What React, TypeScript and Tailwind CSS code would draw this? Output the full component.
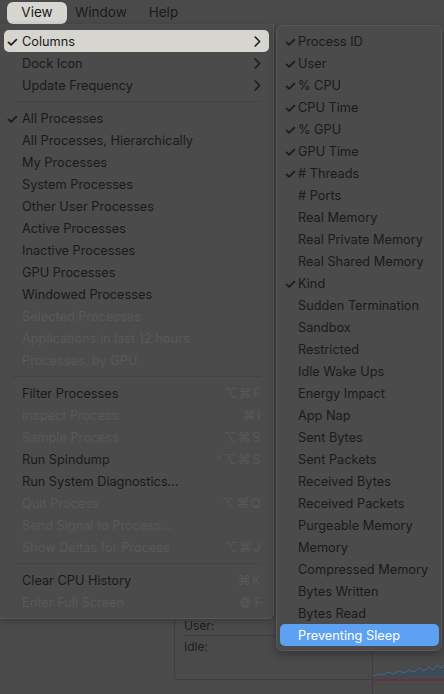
import React from "react";

type Item =
  | { sep: true }
  | { label: string; check?: boolean; disabled?: boolean; shortcut?: string; arrow?: boolean; hl?: boolean; sep?: false };

const leftItems: Item[] = [
  { label: "Columns", check: true, arrow: true, hl: true },
  { label: "Dock Icon", arrow: true },
  { label: "Update Frequency", arrow: true },
  { sep: true },
  { label: "All Processes", check: true },
  { label: "All Processes, Hierarchically" },
  { label: "My Processes" },
  { label: "System Processes" },
  { label: "Other User Processes" },
  { label: "Active Processes" },
  { label: "Inactive Processes" },
  { label: "GPU Processes" },
  { label: "Windowed Processes" },
  { label: "Selected Processes", disabled: true },
  { label: "Applications in last 12 hours", disabled: true },
  { label: "Processes, by GPU", disabled: true },
  { sep: true },
  { label: "Filter Processes", shortcut: "⌥⌘F" },
  { label: "Inspect Process", disabled: true, shortcut: "⌘I" },
  { label: "Sample Process", disabled: true, shortcut: "⌥⌘S" },
  { label: "Run Spindump", shortcut: "^⌥⌘S" },
  { label: "Run System Diagnostics…" },
  { label: "Quit Process", disabled: true, shortcut: "⌥⌘Q" },
  { label: "Send Signal to Process…", disabled: true },
  { label: "Show Deltas for Process", disabled: true, shortcut: "⌥⌘J" },
  { sep: true },
  { label: "Clear CPU History", shortcut: "⌘K" },
  { label: "Enter Full Screen", disabled: true, shortcut: "globe" },
];

const cols: [string, boolean][] = [
  ["Process ID", true],
  ["User", true],
  ["% CPU", true],
  ["CPU Time", true],
  ["% GPU", true],
  ["GPU Time", true],
  ["# Threads", true],
  ["# Ports", false],
  ["Real Memory", false],
  ["Real Private Memory", false],
  ["Real Shared Memory", false],
  ["Kind", true],
  ["Sudden Termination", false],
  ["Sandbox", false],
  ["Restricted", false],
  ["Idle Wake Ups", false],
  ["Energy Impact", false],
  ["App Nap", false],
  ["Sent Bytes", false],
  ["Sent Packets", false],
  ["Received Bytes", false],
  ["Received Packets", false],
  ["Purgeable Memory", false],
  ["Memory", false],
  ["Compressed Memory", false],
  ["Bytes Written", false],
  ["Bytes Read", false],
];

const font = { fontFamily: "Inter, 'Noto Sans', sans-serif" };

function Chevron() {
  return (
    <svg width="7" height="11" viewBox="0 0 7 11" className="absolute right-[8px] top-[6px]">
      <path d="M1.2 1 L5.6 5.5 L1.2 10" fill="none" stroke="#1a1a1a" strokeWidth="1.6" strokeLinecap="round" strokeLinejoin="round" />
    </svg>
  );
}

function Globe() {
  return (
    <svg width="11" height="11" viewBox="0 0 12 12" className="inline-block mr-[3px] -mt-[2px]">
      <circle cx="6" cy="6" r="5" fill="none" stroke="#575757" strokeWidth="1.3" />
      <ellipse cx="6" cy="6" rx="2.2" ry="5" fill="none" stroke="#575757" strokeWidth="1.1" />
      <path d="M1 6 H11 M2 3.3 H10 M2 8.7 H10" stroke="#575757" strokeWidth="1.1" />
    </svg>
  );
}

function Shortcut({ s }: { s: string }) {
  if (s === "globe")
    return (
      <span className="absolute right-[7px] top-0 leading-[24px] text-[#575757]">
        <Globe />F
      </span>
    );
  return (
    <span className="absolute right-[7px] top-0 leading-[24px] text-[#585858] tracking-[1.5px]">
      {s}
    </span>
  );
}

function Check() {
  return <span className="absolute left-[2px] top-0 leading-[24px] text-[14px] font-semibold">✓</span>;
}

export default function App() {
  return (
    <div className="relative w-[444px] h-[694px] overflow-hidden bg-[#4a4a4a] text-[12.75px] text-[#1a1a1a]" style={font}>
      {/* menu bar */}
      <div className="flex items-center h-[24px] pl-[7px] text-[13.5px]">
        <div className="h-[22px] w-[60px] mt-[1px] rounded-[6px] bg-[#d7d6d1] flex items-center justify-center">View</div>
        <div className="ml-[8px]">Window</div>
        <div className="ml-[22px]">Help</div>
      </div>

      {/* background window content */}
      <div className="flex pt-[586px]">
        <div className="ml-[174px] w-[198px] h-[70px] border-l border-b border-[#3e3e3e] rounded-bl-[3px] flex flex-col pl-[9px] pt-[6px]">
          <div className="h-[20px] leading-[20px] text-[12px] text-[#1e1e1e] border-b border-[#3c3c3c]">User:</div>
          <div className="h-[22px] leading-[22px] text-[12px] text-[#1e1e1e]">Idle:</div>
        </div>
        <div className="flex-1 h-[84px] border-l border-[#3e3e3e] relative">
          <svg width="72" height="84" viewBox="0 0 72 84" className="absolute left-0 top-0">
            <path d="M0 66 L6 64 L10 65 L15 62 L20 64 L26 61 L31 63 L36 60 L41 62 L46 58 L51 61 L56 57 L60 60 L64 55 L68 58 L72 54 L72 70 L0 70 Z" fill="#3f4a57" />
            <path d="M0 66 L6 64 L10 65 L15 62 L20 64 L26 61 L31 63 L36 60 L41 62 L46 58 L51 61 L56 57 L60 60 L64 55 L68 58 L72 54" fill="none" stroke="#4d6680" strokeWidth="1" />
            <path d="M0 70 H72" stroke="#7a2a2a" strokeWidth="1.5" />
          </svg>
        </div>
      </div>

      {/* left menu */}
      <div className="absolute left-[-1px] top-[24px] w-[275px] bg-[#4b4b4b] border-r border-b border-[#575757] rounded-br-[6px] shadow-[0_2px_6px_rgba(0,0,0,0.25)] pt-[6px] pb-[5px] pl-[5px] pr-[4px]">
        {leftItems.map((it, i) =>
          it.sep ? (
            <div key={i} className="h-[11px] flex items-center px-[8px]">
              <div className="h-px w-full bg-[#444]" />
            </div>
          ) : (
            <div
              key={i}
              className={
                "relative h-[22px] leading-[24px] pl-[18px] rounded-[5px] " +
                (it.hl ? "bg-[#d6d5d0] " : "") +
                (it.disabled ? "text-[#585858]" : "text-[#1a1a1a]")
              }
            >
              {it.check && <Check />}
              {it.label}
              {it.arrow && <Chevron />}
              {it.shortcut && <Shortcut s={it.shortcut} />}
            </div>
          )
        )}
      </div>

      {/* submenu */}
      <div className="absolute left-[276px] top-[25px] w-[166px] bg-[#4b4b4b] border border-[#575757] rounded-[6px] shadow-[0_3px_8px_rgba(0,0,0,0.3)] pt-[4px] pb-[4px] pl-[3px] pr-[2px]">
        {cols.map(([c, ch], i) => (
          <div key={i} className="relative h-[22px] leading-[24px] pl-[18px] text-[#1a1a1a]">
            {ch && <span className="absolute left-[4px] top-0 leading-[24px] text-[14px] font-semibold">✓</span>}
            {c}
          </div>
        ))}
        <div className="relative h-[22px] leading-[24px] pl-[18px] rounded-[5px] bg-[#5ca1f2] text-white">Preventing Sleep</div>
      </div>
    </div>
  );
}
